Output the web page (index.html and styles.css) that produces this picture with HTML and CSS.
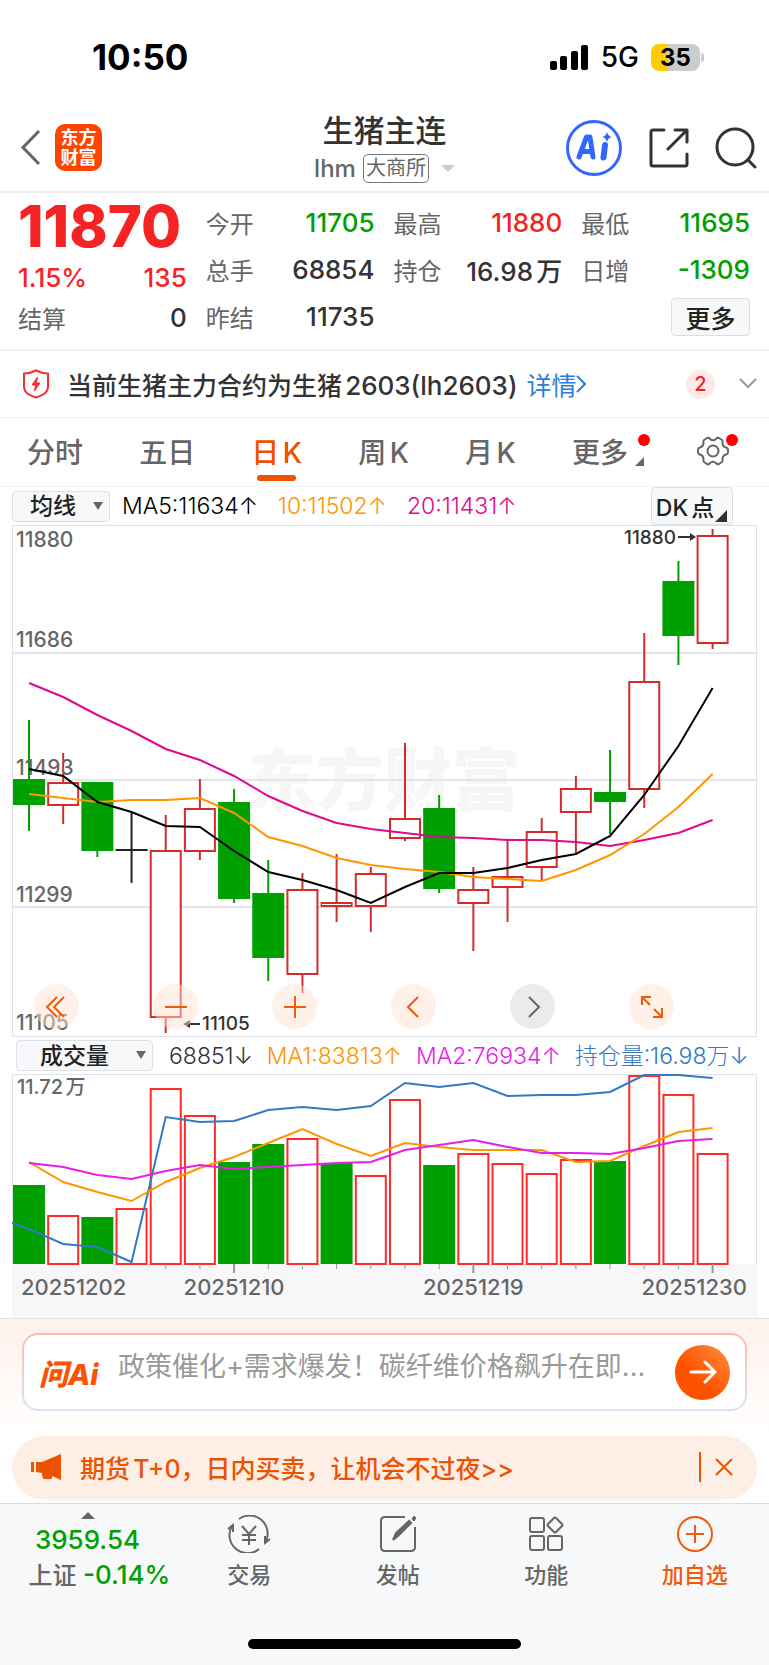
FILE: index.html
```html
<!DOCTYPE html>
<html lang="zh-CN">
<head>
    <meta charset="UTF-8">
    <meta name="viewport" content="width=device-width, initial-scale=1.0">
    <title>生猪主连</title>
    <link rel="stylesheet" href="styles.css">
</head>
<body>
    <div class="status-bar">
        <span class="time">10:50</span>
        <div class="status-right">
            <svg width="38" height="25" viewBox="0 0 38 25">
                <rect x="0" y="16" width="7" height="9" rx="2"/>
                <rect x="10" y="11" width="7" height="14" rx="2"/>
                <rect x="21" y="6" width="7" height="19" rx="2"/>
                <rect x="31" y="0" width="7" height="25" rx="2"/>
            </svg>
            <span class="network">5G</span>
            <span class="battery">35</span>
        </div>
    </div>

    <header class="header">
        <div class="header-left">
            <button class="icon-button" aria-label="返回">
                <svg width="21" height="35" viewBox="0 0 21 35" fill="none" stroke="#666" stroke-width="3"><path d="M19 1L3 17.500L19 34"/></svg>
            </button>
            <div class="logo"><span>东方</span><span>财富</span></div>
        </div>
        <div class="header-title">
            <h1>生猪主连</h1>
            <div class="subtitle">
                <span>lhm</span>
                <span class="exchange">大商所</span>
                <i class="caret-light"></i>
            </div>
        </div>
        <div class="header-right">
            <button class="icon-button" aria-label="AI">
                <svg width="58" height="58" viewBox="0 0 58 58">
                    <circle cx="29" cy="29" r="26.500" fill="#fff" stroke="#3366ff" stroke-width="3"/>
                    <path d="M14 38L21.500 18H25L28 38M17 32.500H27" fill="none" stroke="#3366ff" stroke-width="5" stroke-linecap="round" stroke-linejoin="round"/>
                    <path d="M40 26L38.500 38.500" stroke="#3366ff" stroke-width="6" stroke-linecap="round"/>
                    <path d="M42 13Q43 17 46.500 18Q43 19 42 23Q41 19 37.500 18Q41 17 42 13Z" fill="#3366ff"/>
                </svg>
            </button>
            <button class="icon-button" aria-label="分享">
                <svg width="40" height="40" viewBox="0 0 40 40" fill="none" stroke="#333" stroke-width="3" stroke-linecap="round" stroke-linejoin="round">
                    <path d="M15 2H4Q2 2 2 4V36Q2 38 4 38H36Q38 38 38 36V26M26 2H38V14M38 2L19 21"/>
                </svg>
            </button>
            <button class="icon-button" aria-label="搜索">
                <svg width="42" height="42" viewBox="0 0 42 42" fill="none" stroke="#333" stroke-width="3" stroke-linecap="round">
                    <circle cx="20" cy="20" r="18"/><path d="M33 33L40 40"/>
                </svg>
            </button>
        </div>
    </header>

    <section class="quote">
        <div class="quote-col quote-main">
            <div class="price up">11870</div>
            <div class="row up"><span>1.15%</span><span>135</span></div>
            <div class="row"><span class="label">结算</span><span>0</span></div>
        </div>
        <div class="quote-col">
            <div class="row"><span class="label">今开</span><span class="down">11705</span></div>
            <div class="row"><span class="label">总手</span><span>68854</span></div>
            <div class="row"><span class="label">昨结</span><span>11735</span></div>
        </div>
        <div class="quote-col">
            <div class="row"><span class="label">最高</span><span class="up">11880</span></div>
            <div class="row"><span class="label">持仓</span><span>16.98万</span></div>
        </div>
        <div class="quote-col">
            <div class="row"><span class="label">最低</span><span class="down">11695</span></div>
            <div class="row"><span class="label">日增</span><span class="down">-1309</span></div>
            <div class="row row-end"><button class="more">更多</button></div>
        </div>
    </section>

    <section class="notice">
        <svg width="28" height="30" viewBox="0 0 28 30" fill="none" stroke="#f52f35" stroke-width="2" stroke-linejoin="round">
            <path d="M14 1.500Q20 4.500 26 4.500V18Q26 25 14 28.500Q2 25 2 18V4.500Q8 4.500 14 1.500Z"/>
            <path d="M15.500 8L10 16H13.500L12.500 22L18 14H14.500Z" fill="#f52f35" stroke-width="1"/>
        </svg>
        <p>当前生猪主力合约为生猪<span class="code">2603(lh2603)</span></p>
        <a href="#">详情<svg width="10" height="18" viewBox="0 0 10 18" fill="none" stroke="#2b7de0" stroke-width="2"><path d="M1 1L9 9L1 17"/></svg></a>
        <span class="count">2</span>
        <button class="icon-button" aria-label="展开">
            <svg width="18" height="12" viewBox="0 0 18 12" fill="none" stroke="#999" stroke-width="2"><path d="M1 1L9 9L17 1"/></svg>
        </button>
    </section>

    <nav class="tabs">
        <button>分时</button>
        <button>五日</button>
        <button class="active">日K</button>
        <button>周K</button>
        <button>月K</button>
        <button class="tab-more">更多<i class="corner"></i><i class="dot"></i></button>
        <button class="tab-settings" aria-label="设置">
            <svg width="32" height="30" viewBox="0 0 32 30" fill="none" stroke="#666" stroke-width="2" stroke-linejoin="round">
                <path d="M10 2Q12 1 13 3Q16 5.500 19 3Q20 1 22 2L25 4Q26 5 25.500 7Q25.500 10.500 29 11.500Q31 12 31 14V16Q31 18 29 18.500Q25.500 19.500 25.500 23Q26 25 25 26L22 28Q20 29 19 27Q16 24.500 13 27Q12 29 10 28L7 26Q6 25 6.500 23Q6.500 19.500 3 18.500Q1 18 1 16V14Q1 12 3 11.500Q6.500 10.500 6.500 7Q6 5 7 4Z"/>
                <circle cx="16" cy="15" r="5.500"/>
            </svg>
            <i class="dot"></i>
        </button>
    </nav>

    <main class="charts">
        <div class="toolbar">
            <div class="picker">
                <select aria-label="主图指标"><option>均线</option></select>
            </div>
            <div class="values">
                <span>MA5:11634↑</span>
                <span class="orange">10:11502↑</span>
                <span class="pink">20:11431↑</span>
            </div>
            <button class="dk">DK点<i class="corner"></i></button>
        </div>

        <div class="kline">
            <svg id="kline" class="plot" viewBox="0 0 745 512"></svg>
            <div class="controls">
                <button aria-label="最早"><svg width="24" height="24" viewBox="0 0 24 24"><path d="M12 2L2 12L12 22M19 2L9 12L19 22"/></svg></button>
                <button aria-label="缩小"><svg width="24" height="24" viewBox="0 0 24 24"><path d="M1 12H23"/></svg></button>
                <button aria-label="放大"><svg width="24" height="24" viewBox="0 0 24 24"><path d="M1 12H23M12 1V23"/></svg></button>
                <button aria-label="左移"><svg width="24" height="24" viewBox="0 0 24 24"><path d="M16 2L6 12L16 22"/></svg></button>
                <button class="off" aria-label="右移"><svg width="24" height="24" viewBox="0 0 24 24"><path d="M8 2L18 12L8 22"/></svg></button>
                <button aria-label="全屏"><svg width="24" height="24" viewBox="0 0 24 24"><path d="M2 10V2H11M2 2L10 10M22 13V22H13M22 22L14 14"/></svg></button>
            </div>
        </div>

        <div class="toolbar toolbar-volume">
            <div class="picker picker-wide">
                <select aria-label="副图指标"><option>成交量</option></select>
            </div>
            <div class="values">
                <span class="dark">68851↓</span>
                <span class="orange">MA1:83813↑</span>
                <span class="magenta">MA2:76934↑</span>
                <span class="blue">持仓量:16.98万↓</span>
            </div>
        </div>

        <svg id="volume" class="plot" viewBox="0 0 745 244"></svg>
    </main>

    <section class="ask">
        <form class="ask-box">
            <span class="ask-logo">问Ai</span>
            <input type="text" aria-label="问AI" placeholder="政策催化+需求爆发！碳纤维价格飙升在即...">
            <button type="button" aria-label="发送">
                <svg width="28" height="26" viewBox="0 0 28 26" fill="none" stroke="#fff" stroke-width="3" stroke-linecap="round" stroke-linejoin="round"><path d="M2 13H26M16 3L26 13L16 23"/></svg>
            </button>
        </form>
    </section>

    <section class="promo">
        <svg width="32" height="26" viewBox="0 0 32 26" fill="#ed5200">
            <path d="M1 8H4V18H1ZM6 8H12L31 0V26L22 22V24Q22 25 21 25H14Q12 24 12 19L6 18Z"/>
        </svg>
        <a href="#">期货T+0，日内买卖，让机会不过夜&gt;&gt;</a>
        <button class="icon-button" aria-label="关闭">
            <svg width="18" height="18" viewBox="0 0 18 18" fill="none" stroke="#ed5200" stroke-width="2"><path d="M1 1L17 17M17 1L1 17"/></svg>
        </button>
    </section>

    <footer class="footer">
        <nav class="bottom-nav">
            <a class="index" href="#">
                <i class="caret-up"></i>
                <b class="down">3959.54</b>
                <span>上证 <b class="down">-0.14%</b></span>
            </a>
            <a href="#">
                <svg width="44" height="38" viewBox="0 0 44 38" fill="none" stroke="#666" stroke-width="2">
                    <path d="M12 4A18 18 0 0 1 39 26M32 34A18 18 0 0 1 5 11M1 14L6 10V17M43 24L38 28V21"/>
                    <path d="M15 11L22 19L29 11M22 19V30M15 20H29M15 25H29"/>
                </svg>
                交易
            </a>
            <a href="#">
                <svg width="38" height="38" viewBox="0 0 38 38" fill="none" stroke="#666" stroke-width="2">
                    <path d="M26 2H6Q2 2 2 6V32Q2 36 6 36H32Q36 36 36 32V12"/>
                    <path d="M14 25L17 18L30 6L32 8L19 21Z" fill="#666"/>
                    <path d="M33 4L35 1L37 3L35 6Z" fill="#666" stroke-width="1"/>
                </svg>
                发帖
            </a>
            <a href="#">
                <svg width="36" height="38" viewBox="0 0 36 38" fill="none" stroke="#666" stroke-width="2">
                    <rect x="2" y="3" width="14" height="14" rx="2"/>
                    <rect x="2" y="21" width="14" height="14" rx="2"/>
                    <rect x="20" y="21" width="14" height="14" rx="2"/>
                    <path d="M26 3Q27 2 28 3L34 9Q35 10 34 11L28 17Q27 18 26 17L20 11Q19 10 20 9Z"/>
                </svg>
                功能
            </a>
            <a class="add" href="#">
                <svg width="38" height="38" viewBox="0 0 38 38" fill="none" stroke="#f05a0a" stroke-width="2">
                    <circle cx="19" cy="19" r="17"/><path d="M10 19H28M19 10V28"/>
                </svg>
                加自选
            </a>
        </nav>
        <div class="home-bar"></div>
    </footer>

    <script src="script.js"></script>
</body>
</html>
```

FILE: styles.css
```css
* {
    box-sizing: border-box;
}

body {
    margin: 0;
    min-height: 100vh;
    display: flex;
    flex-direction: column;
    background: #fff;
    color: #333;
    font-family: Inter, "Noto Sans CJK SC", sans-serif;
    font-size: 24px;
    text-autospace: normal;
}

button, input, select {
    font: inherit;
    color: inherit;
    margin: 0;
    padding: 0;
    border: none;
    background: none;
}

a {
    color: inherit;
    text-decoration: none;
}

svg {
    display: block;
    flex: none;
}

.up { color: #f52424; }
.down { color: #00a000; }
.orange { color: #ff9500; }
.pink { color: #e0098a; }
.magenta { color: #e81ee8; }
.blue { color: #3478c6; }
.dark { color: #333; }

/* status bar */
.status-bar {
    display: flex;
    justify-content: space-between;
    align-items: center;
    height: 104px;
    padding: 10px 69px 0 92px;
    color: #000;
}

.time {
    font-size: 35px;
    font-weight: 700;
}

.status-right {
    display: flex;
    align-items: center;
}

.network {
    font-size: 28px;
    font-weight: 500;
    margin: 0 12px 0 13px;
}

.battery {
    position: relative;
    width: 49px;
    height: 27px;
    border-radius: 8px;
    background: linear-gradient(90deg, #ffcc00 35%, #ccc 35%);
    font-size: 24px;
    font-weight: 700;
    line-height: 27px;
    text-align: center;
}

.battery::after {
    content: "";
    position: absolute;
    right: -4px;
    top: 9px;
    width: 3px;
    height: 9px;
    border-radius: 0 3px 3px 0;
    background: #ccc;
}

/* header */
.header {
    display: grid;
    grid-template-columns: 1fr auto 1fr;
    align-items: center;
    height: 89px;
    padding: 0 12px;
    border-bottom: 2px solid #eee;
}

.header-left, .header-right {
    display: flex;
    align-items: center;
}

.header-left {
    gap: 14px;
    padding-left: 8px;
}

.header-right {
    justify-content: flex-end;
    gap: 26px;
}

.logo {
    display: flex;
    flex-direction: column;
    justify-content: center;
    width: 47px;
    height: 47px;
    border-radius: 10px;
    background: #ff4400;
    color: #fff;
    font-size: 18px;
    font-weight: 700;
    line-height: 20px;
    text-align: center;
}

.header-title {
    text-align: center;
}

.header-title h1 {
    margin: 0;
    font-size: 31px;
    font-weight: 500;
    line-height: 42px;
}

.subtitle {
    display: flex;
    align-items: center;
    justify-content: center;
    gap: 7px;
    height: 34px;
    color: #666;
    font-weight: 500;
}

.exchange {
    padding: 0 2px;
    border: 1px solid #777;
    border-radius: 5px;
    font-size: 20px;
    font-weight: 400;
    line-height: 27px;
}

.caret-light {
    margin-left: 5px;
    border: 7px solid transparent;
    border-top-color: #ccc;
    border-bottom: none;
}

/* quote */
.quote {
    display: grid;
    grid-template-columns: repeat(4, 1fr);
    gap: 19px;
    padding: 6px 19px 9px 18px;
    border-bottom: 2px solid #f0f0f0;
    font-size: 26px;
    font-weight: 500;
}

.row {
    display: flex;
    justify-content: space-between;
    align-items: center;
    height: 47px;
    white-space: nowrap;
}

.row-end {
    justify-content: flex-end;
}

.label {
    color: #666;
    font-size: 24px;
    font-weight: 400;
}

.price {
    height: 58px;
    font-size: 58px;
    font-weight: 800;
    line-height: 54px;
}

.quote-main .row {
    height: 40px;
}

.more {
    width: 79px;
    height: 38px;
    border: 1px solid #dcdde3;
    border-radius: 4px;
    background: #f7f8fa;
    color: #222;
    font-size: 25px;
}

/* notice */
.notice {
    display: flex;
    align-items: center;
    height: 67px;
    padding: 0 12px 0 22px;
    border-bottom: 1px solid #eee;
    font-size: 25px;
    font-weight: 500;
}

.notice p {
    margin: 0 9px 0 17px;
}

.code {
    font-size: 26px;
}

.notice a {
    display: flex;
    align-items: center;
    color: #2b7de0;
    font-weight: 400;
}

.count {
    width: 29px;
    height: 29px;
    margin: 0 24px 0 auto;
    border-radius: 50%;
    background: #ffeaea;
    color: #f52424;
    font-size: 20px;
    line-height: 29px;
    text-align: center;
}

/* tabs */
.tabs {
    display: flex;
    justify-content: space-between;
    height: 69px;
    padding: 0 40px 0 27px;
    border-bottom: 1px solid #f2f2f2;
    color: #666;
    font-size: 28px;
    font-weight: 500;
}

.tabs button {
    position: relative;
    padding-bottom: 2px;
    white-space: nowrap;
}

.tabs .active {
    color: #ed5200;
}

.tabs .active::after {
    content: "";
    position: absolute;
    left: 50%;
    bottom: 5px;
    width: 39px;
    height: 6px;
    margin-left: -20px;
    border-radius: 3px;
    background: #ed5200;
}

.corner {
    position: absolute;
    right: 5px;
    bottom: 2px;
    border-left: 12px solid transparent;
    border-bottom: 12px solid #333;
}

.tabs .tab-more {
    padding-right: 13px;
}

.tab-more .corner {
    right: -3px;
    bottom: 20px;
    border-left-width: 9px;
    border-bottom: 9px solid #666;
}

.dot {
    position: absolute;
    top: 16px;
    right: -9px;
    width: 12px;
    height: 12px;
    border-radius: 50%;
    background: #f00;
}

/* charts */
.charts {
    padding: 0 12px;
}

.toolbar {
    display: flex;
    align-items: center;
    gap: 12px;
    height: 38px;
    color: #000;
}

.picker {
    position: relative;
    flex: none;
    width: 98px;
    height: 31px;
}

.picker select {
    appearance: none;
    width: 100%;
    height: 100%;
    padding-left: 17px;
    border: 1px solid #dfe0e6;
    border-radius: 4px;
    background: #f7f8fa;
    color: #222;
    font-size: 23px;
    font-weight: 500;
    line-height: 28px;
}

.picker::after {
    content: "";
    position: absolute;
    right: 7px;
    top: 11px;
    border: 5px solid transparent;
    border-top: 8px solid #666;
    border-bottom: none;
}

.picker-wide {
    width: 137px;
}

.picker-wide select {
    padding-left: 23px;
}

.values {
    display: flex;
    gap: 20px;
    font-size: 23px;
    font-weight: 300;
    line-height: 30px;
    white-space: nowrap;
    text-autospace: no-autospace;
}

.dk {
    position: relative;
    width: 82px;
    height: 38px;
    margin: 0 24px 0 auto;
    padding: 0 14px 0 0;
    border: 1px solid #dfe0e6;
    border-radius: 4px;
    background: #f7f8fa;
    color: #222;
    font-size: 23px;
    font-weight: 500;
    white-space: nowrap;
}

.toolbar-volume {
    gap: 16px;
    padding-left: 4px;
    height: 37px;
}

.toolbar-volume .values {
    gap: 14px;
}

.plot {
    width: 100%;
    height: auto;
    font-weight: 500;
}

.kline {
    position: relative;
}

/* round buttons float over the candles */
.controls {
    position: absolute;
    left: 22px;
    right: 83px;
    bottom: 8px;
    display: flex;
    justify-content: space-between;
}

.controls button {
    display: flex;
    align-items: center;
    justify-content: center;
    width: 45px;
    height: 45px;
    border-radius: 50%;
    background: rgba(255, 226, 210, 0.5);
}

.controls svg {
    fill: none;
    stroke: #f05a0a;
    stroke-width: 2;
}

.controls .off {
    background: #ebebeb;
}

.controls .off svg {
    stroke: #666;
}

/* ask ai */
.ask {
    padding: 14px 22px 25px;
    border-top: 1px solid #dfe3ec;
    background: linear-gradient(#fff1ec, #fff);
}

.ask-box {
    display: flex;
    align-items: center;
    height: 78px;
    padding: 0 15px;
    border: 2px solid transparent;
    border-radius: 16px;
    background: linear-gradient(#fff, #fff) padding-box, linear-gradient(#ffb9ae, #dbe4f5) border-box;
}

.ask-logo {
    width: 64px;
    color: #ff5200;
    font-size: 29px;
    font-weight: 800;
    font-style: italic;
    white-space: nowrap;
    text-autospace: no-autospace;
}

.ask-box input {
    flex: 1;
    min-width: 0;
    height: 40px;
    margin: 0 18px 12px 15px;
    outline: none;
    font-size: 27px;
    text-autospace: no-autospace;
}

.ask-box input::placeholder {
    color: #999;
}

.ask-box button {
    display: flex;
    align-items: center;
    justify-content: center;
    width: 55px;
    height: 55px;
    border-radius: 50%;
    background: linear-gradient(45deg, #ff5200 40%, #ff9040);
}

/* promo */
.promo {
    display: flex;
    align-items: center;
    height: 64px;
    margin: 0 12px 3px;
    padding: 0 24px 2px 18px;
    border-radius: 32px;
    background: #fdeee6;
    color: #ed5200;
    font-size: 25px;
    font-weight: 500;
}

.promo a {
    flex: 1;
    margin-left: 18px;
}

.promo button {
    padding: 6px 0 6px 14px;
    border-left: 2px solid #ed5200;
}

/* footer */
.footer {
    flex: 1;
    display: flex;
    flex-direction: column;
    justify-content: space-between;
    align-items: center;
    border-top: 1px solid #d9dce0;
    background: #f7f8fa;
}

.bottom-nav {
    display: flex;
    width: 100%;
    color: #666;
    font-size: 22px;
    font-weight: 500;
}

.bottom-nav a {
    flex: 1;
    display: flex;
    flex-direction: column;
    align-items: center;
    gap: 8px;
    padding-top: 11px;
    line-height: 28px;
}

.bottom-nav .index {
    flex: none;
    width: 175px;
    gap: 7px;
    padding-top: 8px;
    font-size: 24px;
    white-space: nowrap;
}

.index span {
    padding-left: 24px;
}

.index b {
    font-size: 26px;
    font-weight: 500;
}

.bottom-nav .add {
    color: #f05a0a;
}

.caret-up {
    border: 7px solid transparent;
    border-bottom-color: #666;
    border-top: none;
}

.home-bar {
    width: 273px;
    height: 10px;
    margin-bottom: 16px;
    border-radius: 5px;
    background: #000;
}
```

FILE: script.js
```js
const GREEN = '#00a000';
const RED = '#d22c2c';
const VOL_RED = '#ff2a2a';
const STEP = 34.18;
const BODY = 32;

// high, top of body, bottom of body, low, direction
const candles = [
    [195, 254, 280, 306, 'down'], [228, 257, 280, 299, 'up'], [257, 257, 326, 332, 'down'],
    [287, 325, 325, 358, 'flat'], [290, 325, 492, 508, 'up'], [254, 283, 326, 335, 'up'],
    [264, 277, 374, 378, 'down'], [335, 368, 433, 456, 'down'], [348, 364, 449, 468, 'up'],
    [329, 377, 381, 397, 'up'], [342, 348, 381, 407, 'up'], [218, 293, 313, 316, 'up'],
    [270, 283, 364, 368, 'down'], [342, 364, 378, 426, 'up'], [315, 351, 362, 397, 'up'],
    [293, 306, 342, 357, 'up'], [251, 263, 287, 328, 'up'], [225, 267, 277, 309, 'down'],
    [108, 156, 264, 283, 'up'], [36, 56, 111, 140, 'down'], [4, 10, 118, 124, 'up']
];

const ma5 = [244, 251, 277, 287, 301, 302, 326, 347, 355, 365, 378, 362, 348, 348, 343, 335, 329, 311, 270, 221, 163];
const ma10 = [269, 273, 277, 275, 275, 273, 288, 312, 321, 333, 340, 344, 347, 352, 354, 356, 345, 330, 309, 282, 249];
const ma20 = [158, 172, 190, 206, 224, 235, 251, 271, 286, 298, 304, 308, 312, 313, 315, 315, 317, 321, 315, 308, 295];

// top of each volume bar
const volumes = [111, 141, 143, 134, 14, 41, 88, 70, 64, 89, 101, 25, 91, 79, 89, 99, 85, 87, 1, 20, 79];
const volDown = [0, 2, 6, 7, 9, 12, 17];
const vma1 = [88, 108, 118, 127, 108, 94, 83, 69, 55, 70, 82, 69, 73, 76, 76, 76, 88, 87, 72, 58, 54];
const vma2 = [89, 93, 101, 105, 97, 91, 95, 93, 91, 89, 88, 76, 71, 66, 73, 79, 79, 80, 74, 67, 65];
const openInterest = [155, 170, 173, 188, 43, 48, 47, 36, 33, 36, 32, 9, 13, 9, 22, 21, 21, 18, 1, 1, 4];

function xAt(i) {
    return 17 + STEP * i;
}

function line(x1, y1, x2, y2, color, width = 2) {
    return `<line x1="${x1}" y1="${y1}" x2="${x2}" y2="${y2}" stroke="${color}" stroke-width="${width}"/>`;
}

function box(x, top, bottom, color, filled) {
    if (filled) {
        return `<rect x="${x - BODY / 2}" y="${top}" width="${BODY}" height="${bottom - top}" fill="${color}"/>`;
    }
    return `<rect x="${x - BODY / 2 + 1}" y="${top + 1}" width="${BODY - 2}" height="${Math.max(bottom - top - 1, 2)}" fill="#fff" stroke="${color}" stroke-width="2"/>`;
}

function curve(values, color, start = '') {
    const points = values.map((y, i) => `${xAt(i)},${y}`).join(' ');
    return `<polyline points="${start} ${points}" fill="none" stroke="${color}" stroke-width="2"/>`;
}

function label(x, y, text, size, color = '#666', anchor = 'start') {
    return `<text x="${x}" y="${y}" font-size="${size}" fill="${color}" text-anchor="${anchor}">${text}</text>`;
}

function drawKline() {
    let out = '<text x="372" y="280" font-size="68" font-weight="900" fill="#f6f6f6" text-anchor="middle">东方财富</text>';
    out += '<rect x="0.5" y="0.5" width="744" height="511" fill="none" stroke="#dfe2e6"/>';
    [128, 255, 382].forEach(y => out += line(0, y, 744, y, '#e2e6ec'));

    candles.forEach(([high, top, bottom, low, dir], i) => {
        const x = xAt(i);
        const color = dir === 'up' ? RED : dir === 'down' ? GREEN : '#222';
        out += line(x, high, x, top, color) + line(x, bottom, x, low, color);
        if (dir === 'flat') {
            out += line(x - 16, top, x + 16, top, color);
        } else {
            out += box(x, top, bottom, color, dir === 'down');
        }
    });

    [[22, 11880], [122, 11686], [250, 11493], [377, 11299], [505, 11105]].forEach(([y, t]) => out += label(4, y, t, 21));
    out += curve(ma20, '#e0098a') + curve(ma10, '#ff9500') + curve(ma5, '#000');

    // highest and lowest price marks
    out += label(664, 19, '11880', 19, '#333', 'end');
    out += line(666, 12, 680, 12, '#333') + '<path d="M678 8L684 12L678 16Z" fill="#333"/>';
    out += label(190, 505, '11105', 19, '#333');
    out += line(175, 499, 188, 499, '#333') + '<path d="M178 495L171 499L178 503Z" fill="#333"/>';
    document.getElementById('kline').innerHTML = out;
}

function drawVolume() {
    let out = '<path d="M0.5 190V0.5H744.5V190" fill="none" stroke="#dfe2e6"/>';
    out += '<rect x="0" y="190" width="745" height="54" fill="#f7f7fa"/>';
    out += label(5, 20, '11.72万', 20);
    volumes.forEach((top, i) => {
        const down = volDown.includes(i);
        out += box(xAt(i), top, 190, down ? GREEN : VOL_RED, down);
        if (i > 3) {
            const big = i % 7 === 6;
            out += line(xAt(i), 190, xAt(i), big ? 199 : 195, '#999', big ? 2 : 1);
        }
    });
    out += curve(openInterest, '#3478c6', '0,149') + curve(vma1, '#ff9500') + curve(vma2, '#e81ee8');
    out += label(9, 221, '20251202', 22);
    out += label(xAt(6), 221, '20251210', 22, '#666', 'middle');
    out += label(xAt(13), 221, '20251219', 22, '#666', 'middle');
    out += label(735, 221, '20251230', 22, '#666', 'end');
    document.getElementById('volume').innerHTML = out;
}

drawKline();
drawVolume();
```
